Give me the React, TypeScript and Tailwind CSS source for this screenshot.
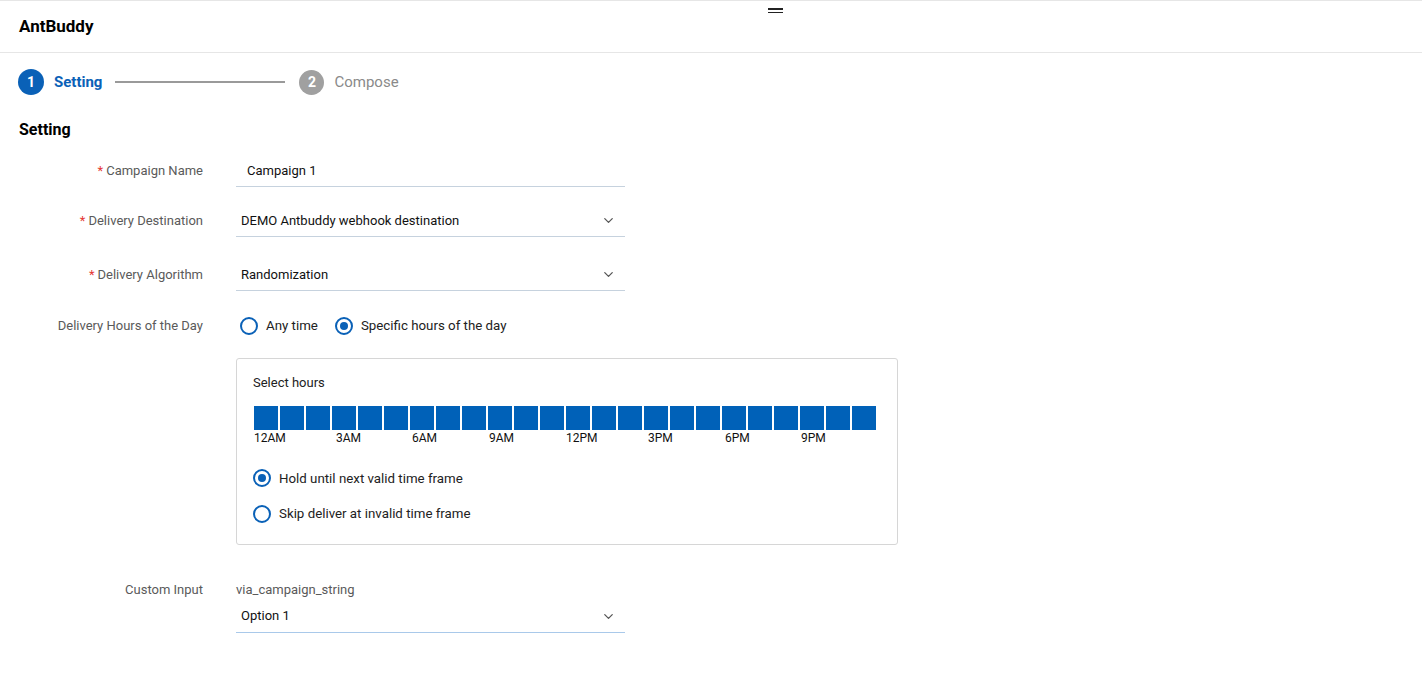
import { ChevronDown } from "lucide-react";

const hourLabels: { col: string; text: string; shift: string }[] = [
  { col: "col-start-1", text: "12AM", shift: "ml-0" },
  { col: "col-start-4", text: "3AM", shift: "ml-[4px]" },
  { col: "col-start-7", text: "6AM", shift: "ml-[2px]" },
  { col: "col-start-10", text: "9AM", shift: "ml-[1px]" },
  { col: "col-start-13", text: "12PM", shift: "ml-0" },
  { col: "col-start-16", text: "3PM", shift: "ml-[4px]" },
  { col: "col-start-19", text: "6PM", shift: "ml-[3px]" },
  { col: "col-start-22", text: "9PM", shift: "ml-[1px]" },
];

function Radio({ checked, label }: { checked?: boolean; label: string }) {
  return (
    <label className="flex items-center gap-[8px] cursor-pointer">
      <span className="w-[18px] h-[18px] rounded-full border-2 border-[#0a61b7] flex items-center justify-center">
        {checked && <span className="w-[8px] h-[8px] rounded-full bg-[#0a61b7]" />}
      </span>
      <span className="text-[13.3px] text-[#222]">{label}</span>
    </label>
  );
}

function Label({ text, required }: { text: string; required?: boolean }) {
  return (
    <div className="w-[184px] shrink-0 text-right text-[13px] text-[#5a5a5a]">
      {required && <span className="text-[#e53935] mr-[3px]">*</span>}
      {text}
    </div>
  );
}

function Select({ value, focused }: { value: string; focused?: boolean }) {
  return (
    <div
      className={
        "w-[389px] h-[32px] flex items-center justify-between pl-[5px] pr-[9px] border-b " +
        (focused ? "border-[#a9c9ea]" : "border-[#c6d2de]")
      }
    >
      <span className="text-[13px] text-[#111]">{value}</span>
      <ChevronDown size={15} strokeWidth={2} className="text-[#555]" />
    </div>
  );
}

export default function App() {
  return (
    <div className="min-h-screen bg-white font-['Roboto',sans-serif] text-[#111]">
      {/* header */}
      <div className="relative h-[53px] border-t border-b border-[#e6e6e6] flex items-center px-[19px]">
        <span className="text-[17px] font-bold text-black">AntBuddy</span>
        <div className="absolute left-[768px] top-[7px] w-[15px] flex flex-col gap-[2px]">
          <span className="h-[1.5px] bg-[#222]" />
          <span className="h-[1.5px] bg-[#222]" />
        </div>
      </div>

      {/* stepper */}
      <div className="flex items-center h-[58px] px-[18px]">
        <span className="w-[26px] h-[26px] rounded-full bg-[#0a61b7] text-white text-[14px] font-bold flex items-center justify-center">
          1
        </span>
        <span className="ml-[10px] text-[15px] font-bold text-[#0a61b7]">Setting</span>
        <span className="ml-[13px] w-[170px] h-[2px] bg-[#9a9a9a]" />
        <span className="ml-[14px] w-[25px] h-[25px] rounded-full bg-[#a0a0a0] text-white text-[14px] font-bold flex items-center justify-center">
          2
        </span>
        <span className="ml-[10px] text-[15px] text-[#8a8a8a]">Compose</span>
      </div>

      <div className="px-[19px]">
        <h2 className="mt-[9px] text-[16px] font-bold text-black leading-[20px]">Setting</h2>

        {/* campaign name */}
        <div className="mt-[16px] flex gap-[33px]">
          <div className="pt-[5px]">
            <Label text="Campaign Name" required />
          </div>
          <div className="w-[389px] h-[31px] flex items-center pl-[11px] border-b border-[#c6d2de]">
            <span className="text-[13px] text-[#111]">Campaign 1</span>
          </div>
        </div>

        {/* destination */}
        <div className="mt-[18px] flex gap-[33px] items-center">
          <Label text="Delivery Destination" required />
          <Select value="DEMO Antbuddy webhook destination" />
        </div>

        {/* algorithm */}
        <div className="mt-[22px] flex gap-[33px] items-center">
          <Label text="Delivery Algorithm" required />
          <Select value="Randomization" />
        </div>

        {/* hours */}
        <div className="mt-[25px] flex gap-[33px]">
          <Label text="Delivery Hours of the Day" />
          <div className="flex flex-col">
            <div className="flex items-center gap-[17px] pl-[4px] h-[20px]">
              <Radio label="Any time" />
              <Radio checked label="Specific hours of the day" />
            </div>
            <div className="mt-[22px] w-[662px] h-[187px] border border-[#d6d6d6] rounded-[3px] pl-[16px] pr-[16px] pt-[14px]">
              <div className="text-[13px] text-[#222]">Select hours</div>
              <div className="mt-[13px] ml-[1px] grid grid-cols-[repeat(24,24px)] gap-x-[2px]">
                {Array.from({ length: 24 }).map((_, i) => (
                  <div key={i} className="h-[24px] bg-[#0061b8]" />
                ))}
              </div>
              <div className="mt-[1px] ml-[1px] grid grid-cols-[repeat(24,24px)] gap-x-[2px]">
                {hourLabels.map((h) => (
                  <span
                    key={h.text}
                    className={h.col + " " + h.shift + " col-span-3 text-[12px] text-[#111] leading-[14px]"}
                  >
                    {h.text}
                  </span>
                ))}
              </div>
              <div className="mt-[24px] flex flex-col gap-[16px]">
                <Radio checked label="Hold until next valid time frame" />
                <Radio label="Skip deliver at invalid time frame" />
              </div>
            </div>
          </div>
        </div>

        {/* custom input */}
        <div className="mt-[35px] flex gap-[33px]">
          <Label text="Custom Input" />
          <div className="flex flex-col">
            <span className="text-[13px] text-[#5a5a5a]">via_campaign_string</span>
            <div className="mt-[1px]">
              <Select value="Option 1" focused />
            </div>
          </div>
        </div>
      </div>
    </div>
  );
}
